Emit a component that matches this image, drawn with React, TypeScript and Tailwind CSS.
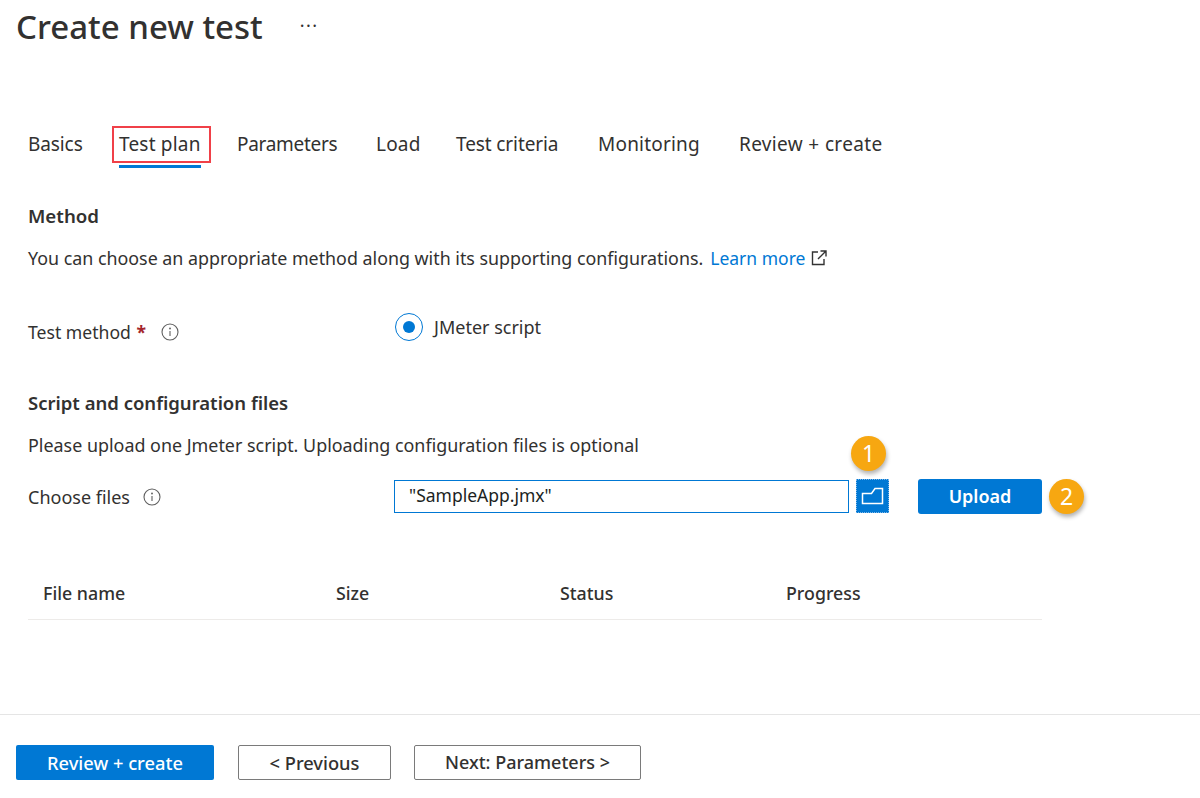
const font = "font-['Noto_Sans','Open_Sans',sans-serif]";

const tabs = [
	{ label: "Basics", className: "w-[91px] tracking-[-0.1px]" },
	{ label: "Test plan", className: "w-[118px] tracking-[0.2px]" },
	{ label: "Parameters", className: "w-[139px] tracking-[-0.3px]" },
	{ label: "Load", className: "w-[80px] tracking-[0.2px]" },
	{ label: "Test criteria", className: "w-[142px] tracking-[-0.1px]" },
	{ label: "Monitoring", className: "w-[141px] tracking-[0.2px]" },
	{ label: "Review + create", className: "tracking-[0.35px]" },
];

function InfoIcon() {
	return (
		<svg width="18" height="18" viewBox="0 0 18 18" fill="none" stroke="#5f5f5f" strokeWidth="1.1">
			<circle cx="9" cy="9" r="8" />
			<path d="M9 8v5" />
			<circle cx="9" cy="5.5" r="0.4" fill="#5f5f5f" />
		</svg>
	);
}

function Badge({ n }: { n: number }) {
	return (
		<div className="w-[35px] h-[35px] rounded-full bg-[#f7a711] text-white text-[23px] leading-[35px] text-center shadow-[1px_3px_4px_rgba(0,0,0,0.3)]">
			{n}
		</div>
	);
}

export default function App() {
	return (
		<div className={`${font} w-[1200px] h-[798px] bg-white text-[#323130] text-[18px] overflow-hidden flex flex-col`}>
			<div className="h-[714px] shrink-0">
				{/* Title */}
				<div className="flex items-start pl-[16px] h-[126px]">
					<h1 className="text-[33px] font-[550] leading-[54px]">Create new test</h1>
					<span className="ml-[37px] mt-[10px] text-[18px] leading-[30px] tracking-[1.5px]">···</span>
				</div>

				{/* Tabs */}
				<div className="flex items-start pl-[28px] h-[76px] text-[19px]">
					{tabs.map((tab) => (
						<div key={tab.label} className={`h-[42px] leading-[36px] whitespace-nowrap ${tab.className}`}>
							{tab.label === "Test plan" ? (
								<div className="relative w-[82px] h-[42px]">
									{tab.label}
									<div className="absolute left-0 right-0 top-[39px] h-[3px] bg-[#0078d4]" />
									<div className="absolute left-[-7px] right-[-10px] top-0 h-[37px] border-[2px] border-[#f04048]" />
								</div>
							) : (
								tab.label
							)}
						</div>
					))}
				</div>

				<div className="pl-[28px]">
					<h2 className="font-semibold leading-[28px] text-[18.7px]">Method</h2>
					<p className="mt-[14px] leading-[28px] flex items-center text-[17.85px]">
						You can choose an appropriate method along with its supporting configurations.
						<a className="ml-[7px] text-[#0078d4] text-[17.5px]">Learn more</a>
						<svg className="ml-[5px]" width="18" height="18" viewBox="0 0 18 18" fill="none" stroke="#333333" strokeWidth="1.4">
							<path d="M8 3H2.5v12.5H14V10M10.5 2H16v5.5M16 2L8 10" />
						</svg>
					</p>

					<div className="flex items-start mt-[41px] h-[76px]">
						<div className="w-[367px] flex items-center gap-[15px] pt-[5px]">
							<span className="leading-[28px] text-[17.6px]">
								Test method <span className="text-[#a4262c] font-bold ml-[1px]">*</span>
							</span>
							<InfoIcon />
						</div>
						<div className="flex items-center gap-[11px]">
							<div className="w-[28px] h-[28px] rounded-full border-[1.5px] border-[#0078d4] flex items-center justify-center">
								<div className="w-[12px] h-[12px] rounded-full bg-[#0078d4]" />
							</div>
							<span className="leading-[28px]">JMeter script</span>
						</div>
					</div>

					<h2 className="font-semibold leading-[28px] text-[18.5px]">Script and configuration files</h2>
					<p className="mt-[14px] leading-[28px] text-[17.9px]">Please upload one Jmeter script. Uploading configuration files is optional</p>

					<div className="relative flex items-center mt-[17px] h-[40px]">
						<div className="w-[366px] flex items-center gap-[13px] pt-[2px]">
							<span>Choose files</span>
							<InfoIcon />
						</div>
						<div className="w-[455px] h-[33px] border border-[#0078d4] pl-[14px] leading-[29px] text-[#201f1e] text-[17.5px]">"SampleApp.jmx"</div>
						<div className="ml-[7px] w-[33px] h-[34px] bg-[#0078d4] border border-dotted border-[#7fb8e8] flex items-center justify-center">
							<svg width="23" height="18" viewBox="0 0 23 18" fill="none" stroke="white" strokeWidth="1.5">
								<path d="M1.5 6.5h9l3.5-5h7.5v15h-20z" />
							</svg>
						</div>
						<div className="ml-[29px] w-[124px] h-[35px] rounded-[3px] bg-[#0078d4] text-white font-semibold text-center leading-[35px]">Upload</div>
						<div className="ml-[7px]">
							<Badge n={2} />
						</div>
						<div className="absolute left-[823px] top-[-40px]">
							<Badge n={1} />
						</div>
					</div>

					{/* File table */}
					<div className="mt-[47px] w-[1014px] h-[57px] border-b border-[#edebe9] pl-[15px] flex items-start font-medium text-[17.8px]">
						<div className="w-[293px] leading-[28px] pt-[16px]">File name</div>
						<div className="w-[224px] leading-[28px] pt-[16px]">Size</div>
						<div className="w-[226px] leading-[28px] pt-[16px]">Status</div>
						<div className="leading-[28px] pt-[16px]">Progress</div>
					</div>
				</div>
			</div>

			{/* Footer */}
			<div className="border-t border-[#e5e5e5] flex items-start pl-[16px] pt-[30px] text-[18.3px] font-medium">
				<div className="w-[198px] h-[35px] mr-[24px] rounded-[2px] bg-[#0078d4] text-white text-center leading-[35px]">Review + create</div>
				<div className="w-[153px] h-[35px] mr-[23px] rounded-[2px] border border-[#7a7a7a] text-center leading-[33px]">&lt; Previous</div>
				<div className="w-[227px] h-[35px] rounded-[2px] border border-[#7a7a7a] text-center leading-[33px] text-[18px]">Next: Parameters &gt;</div>
			</div>
		</div>
	);
}
